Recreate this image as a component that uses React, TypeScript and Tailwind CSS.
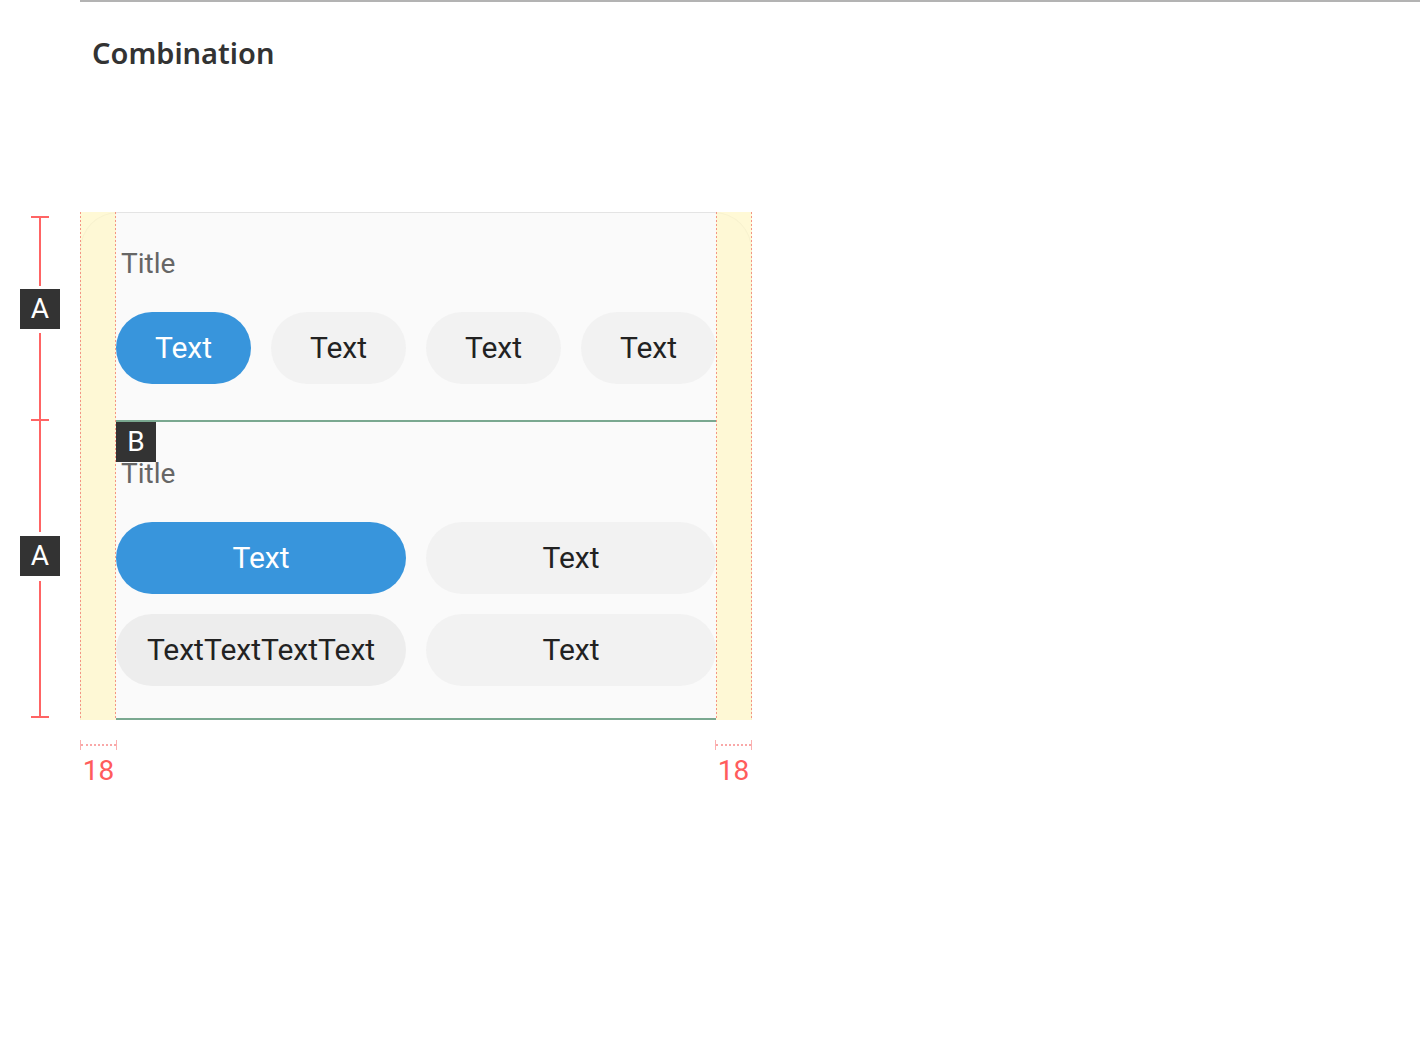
import React from "react";

const roboto = { fontFamily: "Roboto, 'Noto Sans', sans-serif" };

function Pill({ label, active, className = "" }: { label: string; active?: boolean; className?: string }) {
  return (
    <div
      className={`flex h-[72px] items-center justify-center rounded-full pb-[2px] text-[30px] ${
        active ? "bg-[#3895dc] text-white" : "text-[#222222]"
      } ${className}`}
    >
      {label}
    </div>
  );
}

function Tick() {
  return <div className="h-[2px] w-[18px] bg-[#ff6464]" />;
}
function VLine({ h }: { h: string }) {
  return <div className={`w-[2px] bg-[#ff6464] ${h}`} />;
}
function Label({ t }: { t: string }) {
  return (
    <div className="flex h-[40px] w-[40px] items-center justify-center bg-[#333333] text-[28px] leading-none text-white">
      {t}
    </div>
  );
}

function Measure() {
  return (
    <div className="flex w-[37px] flex-col items-center">
      <div className="flex h-[10px] w-[37px] items-center">
        <div className="h-[10px] w-[1px] bg-[#fbb0b0]" />
        <div className="h-0 flex-1 border-t-2 border-dotted border-[#f9a8a8]" />
        <div className="h-[10px] w-[1px] bg-[#fbb0b0]" />
      </div>
      <div className="mt-[5px] text-[28px] leading-[32px] text-[#ff5c5c]">18</div>
    </div>
  );
}

function Dots() {
  return (
    <div className="w-[1px] bg-[repeating-linear-gradient(to_bottom,#f49484_0px,#f49484_2px,transparent_2px,transparent_4px)]" />
  );
}

function Strip({ side }: { side: "left" | "right" }) {
  return (
    <div
      className={`absolute bottom-0 top-0 flex w-[36px] justify-between bg-[#fff6c4]/70 ${
        side === "left" ? "left-0" : "right-0"
      }`}
    >
      <Dots />
      <Dots />
    </div>
  );
}

export default function App() {
  return (
    <div className="relative h-[1050px] w-[1420px] overflow-hidden bg-white" style={roboto}>
      <div className="ml-[80px] h-[2px] bg-[#b3b3b3]" />
      <div
        className="ml-[92px] mt-[31px] text-[29px] font-semibold leading-[40px] text-[#333333]"
        style={{ fontFamily: "'Noto Sans', sans-serif" }}
      >
        Combination
      </div>

      <div className="mt-[139px] flex">
        {/* annotation column */}
        <div className="flex w-[80px] flex-col items-center pt-[4px]">
          <Tick />
          <VLine h="h-[68px]" />
          <div className="h-[3px]" />
          <Label t="A" />
          <div className="h-[4px]" />
          <VLine h="h-[86px]" />
          <Tick />
          <VLine h="h-[111px]" />
          <div className="h-[4px]" />
          <Label t="A" />
          <div className="h-[5px]" />
          <VLine h="h-[135px]" />
          <Tick />
        </div>

        {/* card */}
        <div className="relative w-[672px]">
          <div className="rounded-t-[38px] border border-b-0 border-[#e4e4e4] bg-[#fafafa] px-[35px]">
            <div className="border-b-2 border-[#7aa890] pb-[36px] pt-[35px]">
              <div className="pl-[5px] text-[28px] leading-[32px] text-[#666666]">Title</div>
              <div className="mt-[32px] grid grid-cols-4 gap-[20px]">
                <Pill label="Text" active />
                <Pill label="Text" className="bg-[#f2f2f2]" />
                <Pill label="Text" className="bg-[#f2f2f2]" />
                <Pill label="Text" className="bg-[#f2f2f2]" />
              </div>
            </div>
            <div className="relative border-b-2 border-[#7aa890] pb-[32px] pt-[36px]">
              <div className="absolute left-0 top-0">
                <Label t="B" />
              </div>
              <div className="pl-[5px] text-[28px] leading-[32px] text-[#666666]">Title</div>
              <div className="mt-[32px] grid grid-cols-2 gap-[20px]">
                <Pill label="Text" active />
                <Pill label="Text" className="bg-[#f2f2f2]" />
                <Pill label="TextTextTextText" className="bg-[#ededed]" />
                <Pill label="Text" className="bg-[#f2f2f2]" />
              </div>
            </div>
          </div>
          <Strip side="left" />
          <Strip side="right" />
        </div>
      </div>

      <div className="ml-[80px] mt-[20px] flex w-[672px] justify-between">
        <Measure />
        <Measure />
      </div>
    </div>
  );
}
